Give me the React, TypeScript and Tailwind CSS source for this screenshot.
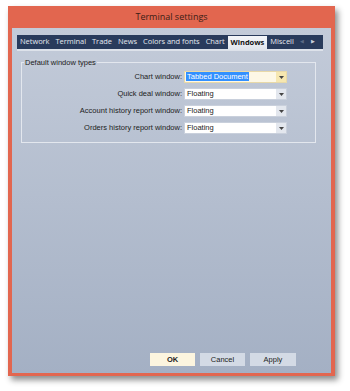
import React from 'react';

const TABS = ['Network', 'Terminal', 'Trade', 'News', 'Colors and fonts', 'Chart', 'Windows', 'Miscell'];

const ROWS = [
  { label: 'Chart window:', value: 'Tabbed Document', active: true },
  { label: 'Quick deal window:', value: 'Floating' },
  { label: 'Account history report window:', value: 'Floating' },
  { label: 'Orders history report window:', value: 'Floating' },
];

function Combo({ value, active }: { value: string; active?: boolean }) {
  return (
    <div
      className={`flex h-[12px] w-[103px] items-center border ${
        active ? 'border-[#e8d9a8] bg-[#fdf8e6]' : 'border-[#c9d0dc] bg-white'
      }`}
    >
      <div className="flex-1 px-px">
        <span
          className={`px-px leading-[10px] ${active ? 'bg-[#3390ff] text-white' : 'text-[#1b1b1b]'}`}
        >
          {value}
        </span>
      </div>
      <div
        className={`flex h-full w-[10px] items-center justify-center ${
          active ? 'bg-[#f6e7b0]' : 'bg-[#e3e7ee]'
        }`}
      >
        <svg width="5" height="3" viewBox="0 0 5 3">
          <path d="M0 0h5L2.5 3z" fill="#444" />
        </svg>
      </div>
    </div>
  );
}

export default function App() {
  return (
    <div className="h-[391px] w-[350px] bg-white pl-[8px] pt-[6px] font-['Liberation_Sans',sans-serif]">
      <div className="flex h-[370px] w-[327px] flex-col bg-[#e2664f] px-[4px] pb-[3px] shadow-[3px_4px_6px_rgba(0,0,0,0.45)]">
        {/* Title bar */}
        <div className="flex h-[22px] items-center justify-center text-[9px] text-[#3a1d16] font-['Open_Sans',sans-serif]">
          Terminal settings
        </div>

        {/* Content */}
        <div className="relative flex flex-1 flex-col bg-gradient-to-b from-[#c3cbd9] to-[#a4b0c4] pl-[5px] pr-[8px] pt-[7px]">
          {/* Tab strip */}
          <div className="border-b-2 border-[#dde2ea]">
            <div className="flex h-[14px] items-center whitespace-nowrap bg-[#293b5c] text-[7.5px] tracking-[-0.05px] text-[#e4e8ef] font-['Open_Sans',sans-serif]">
              {TABS.map(t =>
                t === 'Windows' ? (
                  <div
                    key={t}
                    className="mt-[2px] flex h-[14px] items-center bg-gradient-to-b from-[#f4f6f9] to-[#dfe4ec] px-[3px] font-bold text-[#111]"
                  >
                    {t}
                  </div>
                ) : (
                  <div key={t} className="px-[3px]">
                    {t}
                  </div>
                )
              )}
              <div className="ml-[3px] flex items-center gap-[7px] text-[5px] text-[#5b6a85]">
                <span>◀</span>
                <span className="text-[#c9d0dc]">▶</span>
              </div>
            </div>
          </div>

          {/* Group box */}
          <div className="relative ml-[4px] mr-[7px] mt-[11px] h-[81px] border border-[#e3e7ee] pt-[8px]">
            <div className="absolute left-[2px] top-[-6px] bg-[#c1c9d7] px-px text-[7.5px] text-[#222]">
              Default window types
            </div>
            <div className="flex flex-col gap-[5px] text-[7.5px] text-[#222]">
              {ROWS.map(r => (
                <div key={r.label} className="flex items-center">
                  <div className="w-[162px] pr-[2px] text-right">{r.label}</div>
                  <Combo value={r.value} active={r.active} />
                </div>
              ))}
            </div>
          </div>

          {/* Buttons */}
          <div className="mt-auto mb-[7px] mr-[27px] flex justify-end gap-[5px] text-[7.5px] text-[#222]">
            <button className="h-[13px] w-[45px] bg-[#fcf5df] font-bold">OK</button>
            <button className="h-[13px] w-[45px] bg-[#d3dae5]">Cancel</button>
            <button className="h-[13px] w-[46px] bg-[#d3dae5]">Apply</button>
          </div>
        </div>
      </div>
    </div>
  );
}
